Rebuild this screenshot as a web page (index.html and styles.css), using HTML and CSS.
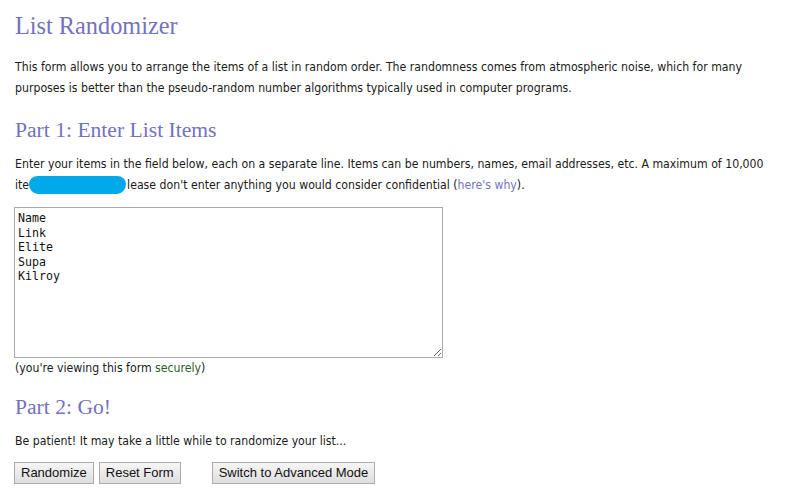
FILE: index.html
```html
<!DOCTYPE html>
<html>
<head>
<meta charset="utf-8">
<link rel="stylesheet" href="styles.css">
</head>
<body>
<h1 class="title">List Randomizer</h1>
<p class="text">This form allows you to arrange the items of a list in random order. The randomness comes from atmospheric noise, which for many purposes is better than the pseudo-random number algorithms typically used in computer programs.</p>
<h2 class="subtitle">Part 1: Enter List Items</h2>
<p class="text">Enter your items in the field below, each on a separate line. Items can be numbers, names, email addresses, etc. A maximum of 10,000 <span class="nowrap">ite<span class="redact"></span>lease</span> don't enter anything you would consider confidential (<a class="link" href="#">here's why</a>).</p>
<form class="form">
<textarea class="list">Name
Link
Elite
Supa
Kilroy</textarea>
<div class="secure">(you're viewing this form <span class="green">securely</span>)</div>
<h2 class="subtitle part2">Part 2: Go!</h2>
<p class="text">Be patient! It may take a little while to randomize your list...</p>
<div class="buttons">
<button type="button" class="btn">Randomize</button>
<button type="button" class="btn">Reset Form</button>
<button type="button" class="btn advanced">Switch to Advanced Mode</button>
</div>
</form>
</body>
</html>
```
FILE: styles.css
```css
html, body { margin: 0; padding: 0; background: #fff; }
body { padding: 0 15px; color: #1a1a1a; font-family: "DejaVu Sans Condensed", "DejaVu Sans", sans-serif; font-size: 12.2px; }
.title { font-family: "Liberation Serif", serif; font-weight: normal; color: #7272be; font-size: 24.3px; margin: 12px 0 0; line-height: 28px; }
.subtitle { font-family: "Liberation Serif", serif; font-weight: normal; color: #7272be; font-size: 21.6px; margin: 0; line-height: 26px; }
.text { margin: 0; line-height: 20.5px; }
.title + .text { margin-top: 17px; margin-bottom: 19px; }
.subtitle + .text { margin-top: 11px; }
.link { color: #7373bd; text-decoration: none; }
.nowrap { white-space: nowrap; }
.redact { display: inline-block; vertical-align: -5px; width: 97px; height: 18px; margin-right: 1px; background: #00a9ea; border-radius: 9px 9px 9px 9px / 8px 8px 10px 10px; }
.form { margin: 12px 0 0 -1px; }
.list { display: block; box-sizing: border-box; width: 429px; height: 151px; margin: 0; border: 1px solid #a9a9a9; padding: 3px 3px; font-family: "DejaVu Sans Mono", monospace; font-size: 11.6px; line-height: 14.6px; color: #111; resize: vertical; }
.secure { margin-top: 2px; margin-left: 1px; line-height: 16px; }
.green { color: #2a5d2a; }
.part2 { margin-top: 18px; margin-left: 1px; }
.part2 + .text { margin-left: 1px; margin-top: 11px; }
.buttons { display: flex; margin-top: 10px; }
.btn { font-family: "Liberation Sans", Arial, sans-serif; font-size: 13px; color: #111; background: linear-gradient(#f6f6f6, #dedede); border: 1px solid #acacac; height: 22px; padding: 0 6px; margin: 0 5px 0 0; line-height: 20px; }
.advanced { margin-left: 26px; }
```
